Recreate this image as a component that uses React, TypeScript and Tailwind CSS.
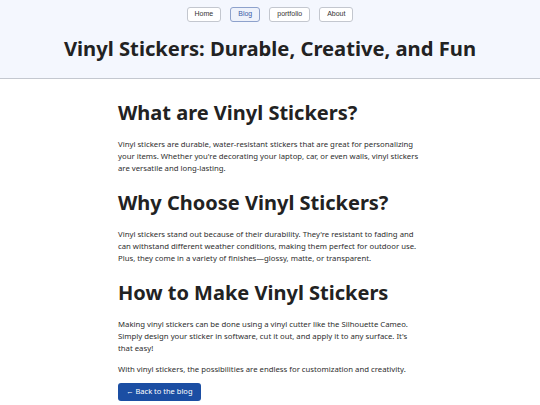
import React from 'react';

const navItems = ['Home', 'Blog', 'portfolio', 'About'];

const sections = [
  {
    title: 'What are Vinyl Stickers?',
    body: [
      "Vinyl stickers are durable, water-resistant stickers that are great for personalizing your items. Whether you're decorating your laptop, car, or even walls, vinyl stickers are versatile and long-lasting.",
    ],
  },
  {
    title: 'Why Choose Vinyl Stickers?',
    body: [
      "Vinyl stickers stand out because of their durability. They're resistant to fading and can withstand different weather conditions, making them perfect for outdoor use. Plus, they come in a variety of finishes\u2014glossy, matte, or transparent.",
    ],
  },
  {
    title: 'How to Make Vinyl Stickers',
    body: [
      "Making vinyl stickers can be done using a vinyl cutter like the Silhouette Cameo. Simply design your sticker in software, cut it out, and apply it to any surface. It's that easy!",
      'With vinyl stickers, the possibilities are endless for customization and creativity.',
    ],
  },
];

export default function App() {
  return (
    <div className="min-h-[405px] bg-white text-[#222]" style={{ fontFamily: '"Noto Sans", sans-serif' }}>
      {/* HEADER */}
      <header className="bg-[#f4f7fe] border-b border-[#c4c8d0] pt-[7px] pb-[18px] text-center">
        <nav className="flex justify-center gap-[9px]" style={{ fontFamily: '"Liberation Sans", Arial, sans-serif' }}>
          {navItems.map(item => (
            <a
              key={item}
              href="#"
              className={`h-[15px] px-[7px] flex items-center text-[7px] rounded-[3px] border ${
                item === 'Blog' ? 'border-[#8ea2cc] text-[#3b5ca8] bg-[#eef2fb]' : 'border-[#c3c7cf] text-[#333] bg-white'
              }`}
            >
              {item}
            </a>
          ))}
        </nav>
        <h1 className="mt-[14px] text-[20.2px] leading-[24px] font-bold text-[#222]">
          Vinyl Stickers: Durable, Creative, and Fun
        </h1>
      </header>

      {/* CONTENT */}
      <main className="w-[304px] mx-auto pt-[22px] flex flex-col items-start">
        {sections.map(section => (
          <section key={section.title} className="flex flex-col mb-[8px]">
            <h2 className="text-[20px] leading-[24px] font-bold text-[#222] mb-[13px]">{section.title}</h2>
            {section.body.map((p, i) => (
              <p key={i} className="text-[7.75px] leading-[12px] text-[#2e2e2e] mb-[9px]">
                {p}
              </p>
            ))}
          </section>
        ))}
        <a
          href="#"
          className="inline-flex items-center h-[18px] px-[8px] -mt-[9px] bg-[#1b4ea3] text-white text-[7.5px] rounded-[3px]"
        >
          ← Back to the blog
        </a>
      </main>
    </div>
  );
}
